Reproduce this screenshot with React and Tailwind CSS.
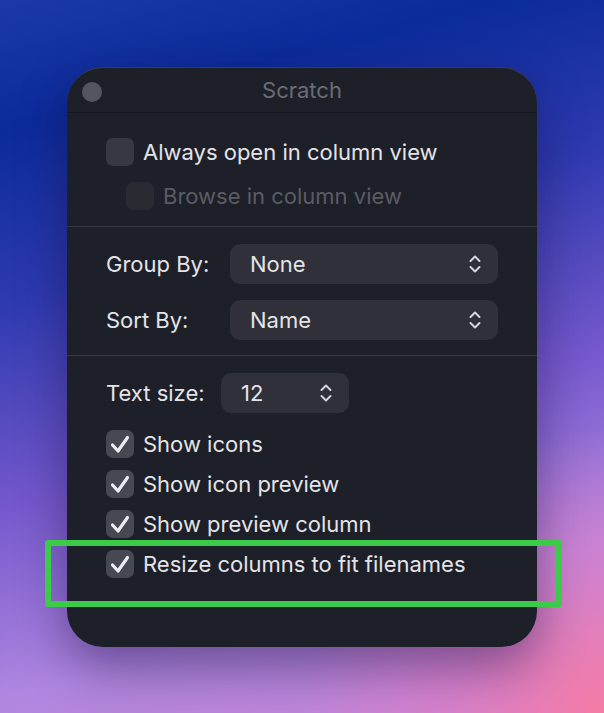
import React from 'react';

const Chevrons = () => (
  <svg width="12" height="18" viewBox="0 0 12 18" fill="none" stroke="#d4d4da" strokeWidth="2" strokeLinecap="round" strokeLinejoin="round">
    <path d="M1.5 6 L6 1.5 L10.5 6" />
    <path d="M1.5 12 L6 16.5 L10.5 12" />
  </svg>
);

const Checkbox = ({ checked, disabled }) => (
  <div
    className={`w-7 h-7 rounded-[7px] flex items-center justify-center shrink-0 ${
      disabled ? 'bg-[#292b33]' : checked ? 'bg-[#474952]' : 'bg-[#363842]'
    }`}
  >
    {checked && (
      <svg width="28" height="28" viewBox="0 0 28 28" fill="none" stroke="#ececf0" strokeWidth="3.2" strokeLinecap="round" strokeLinejoin="round">
        <path d="M6.5 15 L12 21 L21.5 7.5" />
      </svg>
    )}
  </div>
);

const CheckRow = ({ label, checked, disabled, className = '' }) => (
  <div className={`flex items-center gap-[9px] h-7 ${className}`}>
    <Checkbox checked={checked} disabled={disabled} />
    <span className={disabled ? 'text-[#5a5c65]' : 'text-[#e4e4e8]'}>{label}</span>
  </div>
);

const Select = ({ value, width }) => (
  <div className={`${width} h-10 rounded-[10px] bg-[#2f3039] flex items-center justify-between pl-5 pr-[17px]`}>
    <span className="text-[#e4e4e8]">{value}</span>
    <Chevrons />
  </div>
);

export default function App() {
  return (
    <div
      className="relative min-h-screen w-full overflow-hidden bg-[radial-gradient(ellipse_50%_40%_at_100%_100%,#f47ba6_0%,rgba(236,124,190,0.5)_50%,transparent_100%),linear-gradient(165deg,#1b3aa8_0%,#0b2b9a_15%,#2e3ab0_35%,#7458cc_58%,#b086e0_80%,#cc86d6_100%)]"
      style={{ fontFamily: 'Inter, "Noto Sans", sans-serif' }}
    >
      <div className="flex justify-center pt-[67px]">
        <div className="w-[470px] h-[580px] rounded-[36px] bg-[#1e2029] shadow-[0_20px_50px_rgba(20,10,60,0.45)] border-t border-[#3a3c48] text-[22px] flex flex-col">
          <div className="relative h-[45px] flex items-center justify-center border-b border-[#17181f]">
            <div className="absolute left-[15px] top-[14px] w-5 h-5 rounded-full bg-[#54555d]" />
            <span className="text-[#6a6c74] text-[22px]">Scratch</span>
          </div>

          <div className="px-[39px] pt-[25px] pb-[16px] flex flex-col gap-4">
            <CheckRow label="Always open in column view" />
            <CheckRow label="Browse in column view" disabled className="pl-5" />
          </div>

          <div className="h-px bg-[#363843]" />

          <div className="px-[39px] pt-[17px] pb-[15px] flex flex-col gap-4">
            <div className="flex items-center">
              <span className="w-[124px] text-[#e4e4e8]">Group By:</span>
              <Select value="None" width="flex-1" />
            </div>
            <div className="flex items-center">
              <span className="w-[124px] text-[#e4e4e8]">Sort By:</span>
              <Select value="Name" width="flex-1" />
            </div>
          </div>

          <div className="h-px bg-[#363843]" />

          <div className="px-[39px] pt-[17px] flex flex-col">
            <div className="flex items-center">
              <span className="w-[115px] text-[#e4e4e8]">Text size:</span>
              <Select value="12" width="w-32" />
            </div>
            <div className="mt-[17px] flex flex-col gap-3">
              <CheckRow label="Show icons" checked />
              <CheckRow label="Show icon preview" checked />
              <CheckRow label="Show preview column" checked />
              <CheckRow label="Resize columns to fit filenames" checked />
            </div>
          </div>
        </div>
      </div>

      <div className="absolute left-[45px] top-[540px] w-[517px] h-[67px] border-[6px] border-[#3ccb48] rounded-[3px]" />
    </div>
  );
}
